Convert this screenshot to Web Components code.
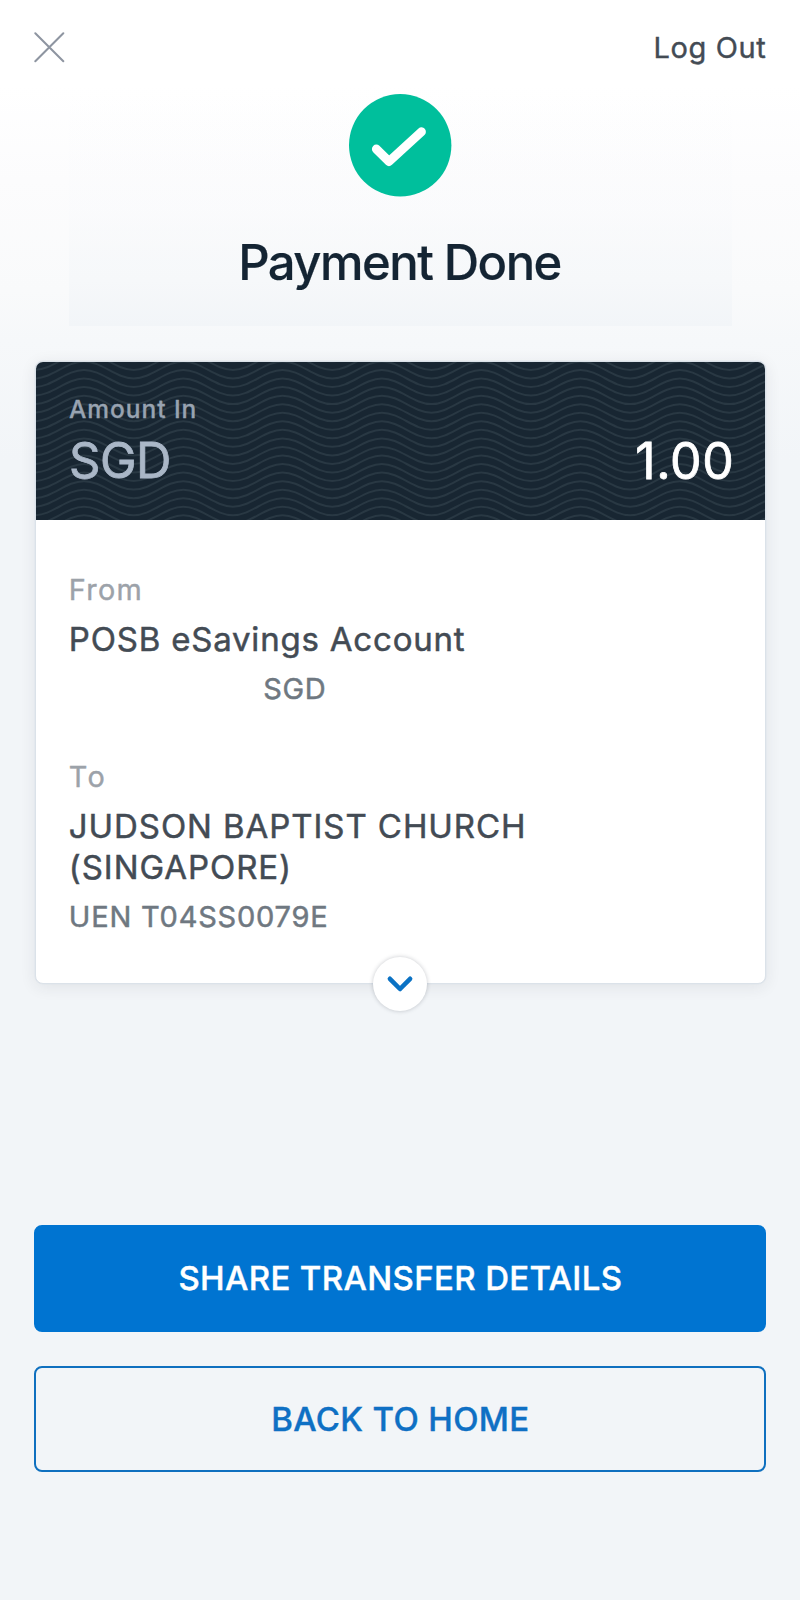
<!DOCTYPE html>
<html lang="en">
<head>
<meta charset="utf-8">
<title>Payment Done</title>
<style>
  body { margin: 0; font-family: Inter, "Liberation Sans", sans-serif; color: #434b54; }
</style>
</head>
<body>
<payment-screen>
  <top-bar slot="bar">Log Out</top-bar>
  <payment-status slot="status">Payment Done</payment-status>
  <transfer-card slot="card">
    <amount-banner slot="banner" currency="SGD" amount="1.00">Amount In</amount-banner>
    <transfer-party label="From" style="--label-spacing:1.3px;--name-spacing:.8px;--detail-indent:194.5px">
      POSB eSavings Account
      <span slot="detail">SGD</span>
    </transfer-party>
    <transfer-party label="To" style="--label-spacing:2.4px;--name-spacing:.93px;--detail-spacing:.8px">
      JUDSON BAPTIST CHURCH (SINGAPORE)
      <span slot="detail">UEN T04SS0079E</span>
    </transfer-party>
  </transfer-card>
  <action-button slot="actions" primary>SHARE TRANSFER DETAILS</action-button>
  <action-button slot="actions">BACK TO HOME</action-button>
</payment-screen>

<script>
function define(name, html, setup) {
  const template = document.createElement('template');
  template.innerHTML = html;
  customElements.define(name, class extends HTMLElement {
    constructor() {
      super();
      this.attachShadow({ mode: 'open' }).append(template.content.cloneNode(true));
    }
    connectedCallback() { if (setup) setup(this, this.shadowRoot); }
  });
}

define('payment-screen', `
  <style>
    :host { display: block; box-sizing: border-box; height: 1600px; overflow: hidden;
      background: linear-gradient(#fff 0, #fff 85px, #fcfcfd 180px, #f9fafb 290px, #f6f8fa 340px, #f2f5f8 460px); }
    .card { padding: 36px 34px 0 35px; }
    .actions { display: grid; gap: 34px; padding: 241px 33.6px 0 34.4px; }
  </style>
  <slot name="bar"></slot>
  <slot name="status"></slot>
  <div class="card"><slot name="card"></slot></div>
  <div class="actions"><slot name="actions"></slot></div>`);

define('top-bar', `
  <style>
    :host { display: flex; justify-content: space-between; align-items: center; height: 94px;
      box-sizing: border-box; padding: 0 33.6px 0 33.7px; }
    svg { display: block; }
    span { padding-top: 1px; font-size: 29px; line-height: 36px; letter-spacing: .62px; -webkit-text-stroke: .4px #434b54; }
  </style>
  <svg width="31" height="31" viewBox="0 0 31 31" fill="none" stroke="#8e95a1" stroke-width="2" stroke-linecap="round"><path d="M1.3 1.3 29.3 29.3M29.3 1.3 1.3 29.3"/></svg>
  <span><slot></slot></span>`);

define('payment-status', `
  <style>
    :host { display: flex; flex-direction: column; align-items: center; gap: 36px; height: 232px;
      box-sizing: border-box; margin: 0 68px -1px 69px;
      background: linear-gradient(rgba(250,251,253,0), rgba(249,250,252,.4) 50%, #f6f8fa 80%, #f2f5f8); }
    svg { display: block; }
    h1 { margin: 0 2px 0 0; font-size: 49px; font-weight: 500; line-height: 60px; letter-spacing: -1.55px; color: #142433;
      -webkit-text-stroke: .2px #142433; }
  </style>
  <svg width="103" height="103" viewBox="0 0 103 103"><circle cx="51.2" cy="51.3" r="51.2" fill="#00bf9c"/><path d="M27.3 55 40 67.5 72.5 37.7" fill="none" stroke="#fff" stroke-width="8.8" stroke-linecap="round" stroke-linejoin="round"/></svg>
  <h1><slot></slot></h1>`);

define('transfer-card', `
  <style>
    :host { display: block; position: relative; box-sizing: border-box; height: 623px; background: #fff;
      border: 1px solid #dbe2e9; border-radius: 8px; box-shadow: 0 0 0 .5px #dfe5eb, 0 3px 16px rgba(40,40,50,.09); }
    .parties { display: grid; gap: 53.5px; padding: 53px 60px 0 32.8px; }
    .toggle { position: absolute; left: 50%; bottom: -28px; width: 54px; height: 54px; margin-left: -27.2px;
      border-radius: 50%; background: #fff; box-shadow: 0 0 4px rgba(40,45,60,.26); }
    svg { display: block; }
  </style>
  <slot name="banner"></slot>
  <div class="parties"><slot></slot></div>
  <div class="toggle"><svg width="54" height="54" viewBox="0 0 54 54" fill="none" stroke="#0b72c4" stroke-width="4.6" stroke-linecap="round" stroke-linejoin="round"><path d="M16.9 21.8 27 32 37.1 21.8"/></svg></div>`);

define('amount-banner', `
  <style>
    :host { display: grid; height: 158px; overflow: hidden; border-radius: 7px 7px 0 0; background: #182632; }
    svg, .content { grid-area: 1 / 1; }
    svg { display: block; width: 100%; height: 158px; }
    .content { padding: 32px 30.5px 0 33px; }
    .label { font-size: 24.5px; font-weight: 500; line-height: 30px; letter-spacing: .95px; color: #98a3b1;
      -webkit-text-stroke: .3px #98a3b1; }
    .row { display: flex; justify-content: space-between; margin-top: 7px; line-height: 60px; }
    .currency { font-size: 49px; letter-spacing: -.5px; color: #aab7c7; -webkit-text-stroke: .8px #aab7c7; }
    .amount { font-size: 50px; letter-spacing: .7px; color: #fff; -webkit-text-stroke: .8px #fff; }
  </style>
  <svg fill="none" stroke="#293843" stroke-width="2"></svg>
  <div class="content">
    <div class="label"><slot></slot></div>
    <div class="row"><span class="currency"></span><span class="amount"></span></div>
  </div>`, (host, root) => {
  root.querySelector('.currency').textContent = host.getAttribute('currency');
  root.querySelector('.amount').textContent = host.getAttribute('amount');
  const half = 49.65, rise = 17, gap = 8.55, c = half * 0.3642;
  let d = '';
  for (let k = -3; k < 20; k++) {
    let dir = 1;
    d += `M-51.3 ${8 + k * gap}`;
    for (let i = 0; i < 16; i++) {
      d += `c${c} 0 ${half - c} ${dir * rise} ${half} ${dir * rise}`;
      dir = -dir;
    }
  }
  const path = document.createElementNS('http://www.w3.org/2000/svg', 'path');
  path.setAttribute('d', d);
  root.querySelector('svg').replaceChildren(path);
});

define('transfer-party', `
  <style>
    :host { display: block; }
    .label { font-size: 28.8px; line-height: 34px; letter-spacing: var(--label-spacing); color: #9ca2a9; -webkit-text-stroke: .4px #9ca2a9; }
    .name { margin-top: 12px; font-size: 33px; line-height: 41px; letter-spacing: var(--name-spacing); -webkit-text-stroke: .5px #434b54; }
    .detail { margin-top: 12px; font-size: 29px; line-height: 34px; letter-spacing: var(--detail-spacing, .6px);
      padding-left: var(--detail-indent, 0); color: #6f7881; -webkit-text-stroke: .5px #6f7881; }
  </style>
  <div class="label"></div>
  <div class="name"><slot></slot></div>
  <div class="detail"><slot name="detail"></slot></div>`, (host, root) => {
  root.querySelector('.label').textContent = host.getAttribute('label');
});

define('action-button', `
  <style>
    :host { display: flex; align-items: center; justify-content: center; box-sizing: border-box; height: 106.5px;
      border: 2px solid #0f70bf; border-radius: 8px; color: #0f70c4; font-size: 33px; font-weight: 500;
      line-height: 40px; letter-spacing: .35px; -webkit-text-stroke: .4px currentColor; }
    :host([primary]) { border-color: #0074d1; background: #0074d1; color: #fff; }
  </style>
  <slot></slot>`);
</script>
</body>
</html>
